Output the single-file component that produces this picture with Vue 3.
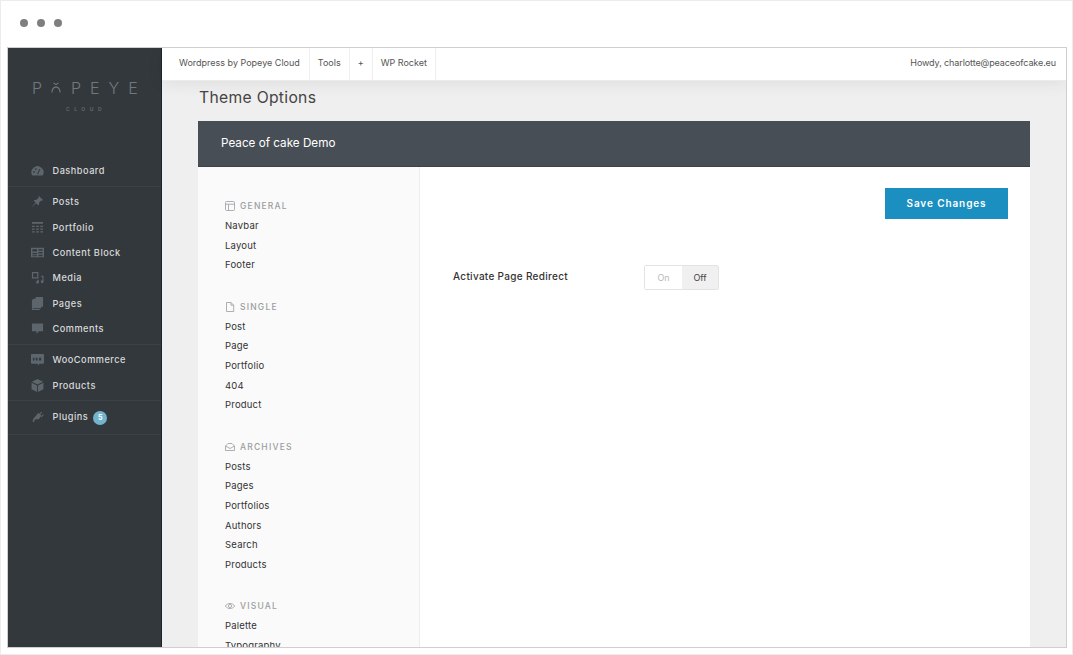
<script setup>
const side = [
  { items: [{ t: 'Dashboard', i: 'dash' }], cls: 'first' },
  { items: [
    { t: 'Posts', i: 'pin' }, { t: 'Portfolio', i: 'port' }, { t: 'Content Block', i: 'block' },
    { t: 'Media', i: 'media' }, { t: 'Pages', i: 'pages' }, { t: 'Comments', i: 'comment' } ] },
  { items: [{ t: 'WooCommerce', i: 'woo' }, { t: 'Products', i: 'box' }] },
  { items: [{ t: 'Plugins', i: 'plug', badge: '5' }], cls: 'last' }
]
const tabs = ['Wordpress by Popeye Cloud', 'Tools', '+', 'WP Rocket']
const sections = [
  { h: 'GENERAL', i: 'layout', items: ['Navbar', 'Layout', 'Footer'] },
  { h: 'SINGLE', i: 'file', items: ['Post', 'Page', 'Portfolio', '404', 'Product'] },
  { h: 'ARCHIVES', i: 'mail', items: ['Posts', 'Pages', 'Portfolios', 'Authors', 'Search', 'Products'] },
  { h: 'VISUAL', i: 'eye', items: ['Palette', 'Typography'] }
]
</script>

<template>
  <div class="page">
    <div class="chrome">
      <i class="dot"></i><i class="dot"></i><i class="dot"></i>
    </div>
    <div class="window">
      <aside class="sidebar">
        <div class="logo">
          <div class="logo-main">
            <span>P</span>
            <svg class="logo-o" viewBox="0 0 12 14" width="10" height="13">
              <path d="M3 1.500 6 3.500 9 1.500" fill="none" stroke="#73787c" stroke-width="1.300" />
              <path d="M1 13C1.500 8.500 3.500 6.500 6 6.500S10.500 8.500 11 13" fill="none" stroke="#73787c" stroke-width="1.300" />
            </svg>
            <span>PEYE</span>
          </div>
          <div class="logo-sub">CLOUD</div>
        </div>
        <nav class="side-nav">
          <div v-for="(g, gi) in side" :key="gi" class="side-group" :class="g.cls">
            <a v-for="it in g.items" :key="it.t" class="side-item">
              <svg class="side-icon" viewBox="0 0 14 14" width="14" height="14" fill="#5c666c">
                <template v-if="it.i === 'dash'">
                  <path d="M1.500 12.500a6.500 6.500 0 1 1 11 0Z" />
                  <path d="M7 11 9.500 5.500" stroke="#33383c" stroke-width="1.100" />
                  <circle cx="3.200" cy="8.500" r=".9" fill="#33383c" /><circle cx="5.200" cy="5.500" r=".9" fill="#33383c" />
                </template>
                <path v-else-if="it.i === 'pin'" d="M8.500 1 13 5.500 12 6.200 11 5.800 8.800 8 8.600 10.500 7.600 11 5.500 8.800 1 13 .8 12.800 5 8.200 3 6.300 3.500 5.400 6 5.200 8.200 3 8 2Z" />
                <path v-else-if="it.i === 'port'" d="M1 1h12v2H1ZM1 5h3v1.500H1ZM5.500 5h3v1.500h-3ZM10 5h3v1.500h-3ZM1 8h3v1.500H1ZM5.500 8h3v1.500h-3ZM10 8h3v1.500h-3ZM1 11h3v1.500H1ZM5.500 11h3v1.500h-3ZM10 11h3v1.500h-3Z" />
                <path v-else-if="it.i === 'block'" d="M0 2h14v10H0Zm1.500 1.500v2.500h5V3.500Zm6.500 0V5h4.500V3.500ZM8 6.500V8h4.500V6.500ZM1.500 7.500V9h5V7.500ZM8 9.500V11h4.500V9.500ZM1.500 10V11h5v-1Z" fill-rule="evenodd" />
                <path v-else-if="it.i === 'media'" d="M1 1h7v7H1Zm1.300 1.300v4.400h4.400V2.300ZM11 5h2.500v6.500a1.500 1.500 0 1 1-1.200-1.400V6.500H11ZM7 9.500h1.500v2.500A1.500 1.500 0 1 1 7 10.600Z" fill-rule="evenodd" />
                <path v-else-if="it.i === 'pages'" d="M5 0h8v10.500h-2V12H2V2h3Z M1 3v11h8.500v-1H2V3Z" />
                <path v-else-if="it.i === 'comment'" d="M1 1.500h12v8.500H8.500L6 13v-3H1Z" />
                <path v-else-if="it.i === 'woo'" d="M1 1h12a1 1 0 0 1 1 1v8.500a1 1 0 0 1-1 1H9L8 13.500 7 11.500H1a1 1 0 0 1-1-1V2a1 1 0 0 1 1-1Zm1 4v3h1.700V5Zm3 0v3h2V5Zm3.500 0v3h2.500V5Z" fill-rule="evenodd" />
                <path v-else-if="it.i === 'box'" d="M7 0 13 3 7 6 1 3ZM.6 4 6.500 7v7L.6 11ZM13.400 4 7.500 7v7l5.900-3Z" />
                <path v-else-if="it.i === 'plug'" d="M8 3 11 6 8.500 10H4.500L3.500 12.500 1.500 13 2.500 9.500ZM8.500 5 11 1.800 12 2.800 9.500 5.500ZM10.500 7 13 4.500 13.800 5.500 11 8Z" />
              </svg>
              <span class="side-label">{{ it.t }}</span>
              <span v-if="it.badge" class="badge">{{ it.badge }}</span>
            </a>
          </div>
        </nav>
      </aside>

      <main class="main">
        <header class="topbar">
          <div class="tabs">
            <span v-for="t in tabs" :key="t" class="tab">{{ t }}</span>
          </div>
          <span class="howdy">Howdy, charlotte@peaceofcake.eu</span>
        </header>
        <div class="content">
          <h1 class="title">Theme Options</h1>
          <section class="card">
            <div class="card-head">Peace of cake Demo</div>
            <div class="card-body">
              <div class="options-nav">
                <div v-for="s in sections" :key="s.h" class="opt-section">
                  <div class="opt-head">
                    <svg viewBox="0 0 10 10" width="10" height="10" fill="none" stroke="#a3a7aa" stroke-width=".9">
                      <template v-if="s.i === 'layout'">
                        <rect x=".5" y=".5" width="9" height="9" rx="1" /><path d="M.5 3.200h9M3.500 3.200v6.300" />
                      </template>
                      <path v-else-if="s.i === 'file'" d="M1.500.5h4.500L8.700 3.200v6.300h-7.200ZM6 .5v2.700h2.700" />
                      <template v-else-if="s.i === 'mail'">
                        <path d="M.5 4 3 1.500h4L9.500 4v4.500h-9Z" /><path d="M.5 4 5 6.500 9.500 4" />
                      </template>
                      <template v-else>
                        <path d="M.3 5C2.800 1.600 7.200 1.600 9.700 5 7.200 8.400 2.800 8.400.3 5Z" /><circle cx="5" cy="5" r="1.600" />
                      </template>
                    </svg>
                    <span>{{ s.h }}</span>
                  </div>
                  <a v-for="it in s.items" :key="it" class="opt-item">{{ it }}</a>
                </div>
              </div>
              <div class="options-panel">
                <div class="actions"><button class="save">Save Changes</button></div>
                <div class="field">
                  <label class="field-label">Activate Page Redirect</label>
                  <div class="toggle">
                    <span class="tg on">On</span>
                    <span class="tg off">Off</span>
                  </div>
                </div>
              </div>
            </div>
          </section>
        </div>
      </main>
    </div>
  </div>
</template>

<style>
html, body { margin: 0; padding: 0; background: #fff; overflow: hidden; }
</style>

<style scoped>
.page {
  width: 1073px;
  height: 655px;
  box-sizing: border-box;
  background: #fff;
  border: 1px solid #ececec;
  overflow: hidden;
  font-family: Inter, "Liberation Sans", sans-serif;
}
.chrome {
  height: 46px;
  box-sizing: border-box;
  padding: 18px 0 0 19px;
  display: flex;
  gap: 9px;
}
.dot { width: 8px; height: 8px; border-radius: 50%; background: #7f7f7f; }
.window {
  margin-left: 6px;
  width: 1060px;
  height: 601px;
  box-sizing: border-box;
  border: 1px solid #cfcfcf;
  display: flex;
  overflow: hidden;
}
.sidebar {
  width: 154px;
  flex: none;
  box-sizing: border-box;
  background: #33383c;
  border-right: 1px solid #1f2327;
}
.logo { height: 107.500px; box-sizing: border-box; padding: 31px 0 0 24px; color: #73787c; }
.logo-main {
  display: flex;
  align-items: center;
  height: 17px;
  font-size: 16px;
  font-weight: 300;
  letter-spacing: 9px;
  white-space: nowrap;
}
.logo-o { margin-right: 10px; }
.logo-sub {
  margin: 10px 0 0 34px;
  font-size: 5px;
  letter-spacing: 4.500px;
  font-weight: 600;
  line-height: 6px;
  color: #666b70;
}
.side-group {
  padding: 2.500px 0;
  border-bottom: 1px solid #3c4145;
}
.side-group.last { padding-bottom: 5.500px; }
.side-item {
  display: flex;
  align-items: center;
  height: 25.300px;
  padding-left: 23px;
}
.side-icon { flex: none; width: 13px; height: 13px; margin-right: 8.500px; }
.side-label {
  font-size: 9.200px;
  font-weight: 500;
  letter-spacing: .5px;
  color: #d8dadb;
  white-space: nowrap;
}
.badge {
  width: 14px;
  height: 14px;
  margin-left: 5px;
  margin-top: 3px;
  border-radius: 50%;
  background: #72b3ce;
  color: #fff;
  font-size: 7px;
  font-weight: 700;
  line-height: 14px;
  text-align: center;
}
.main { flex: 1; min-width: 0; display: flex; flex-direction: column; background: #efefef; }
.topbar {
  height: 33px;
  flex: none;
  box-sizing: border-box;
  background: #fff;
  border-bottom: 1px solid #ececec;
  display: flex;
  justify-content: space-between;
  align-items: stretch;
  padding-right: 10px;
  box-shadow: 0 3px 16px rgba(0,0,0,.07);
  position: relative;
  z-index: 1;
  font-size: 9px;
  color: #555;
}
.tabs { display: flex; }
.tab {
  display: flex;
  align-items: center;
  padding: 0 8px 3px;
  border-right: 1px solid #f0f0f0;
  white-space: nowrap;
}
.tab:first-child { padding: 0 9px 3px 17px; }
.howdy { display: flex; align-items: center; padding-bottom: 3px; letter-spacing: -.1px; }
.content { flex: 1; min-height: 0; padding: 0 36px; overflow: hidden; }
.title {
  margin: 0;
  height: 40px;
  font-size: 15.700px;
  font-weight: 400;
  line-height: 33px;
  color: #444;
  letter-spacing: .3px;
  padding-left: 1px;
  box-sizing: border-box;
}
.card-head {
  height: 46px;
  box-sizing: border-box;
  background: #484e55;
  border-bottom: 1px solid #3d4248;
  color: #fff;
  font-size: 11.700px;
  line-height: 45px;
  padding-left: 23px;
}
.card-body { display: flex; background: #fff; height: 480px; }
.options-nav {
  width: 222px;
  flex: none;
  box-sizing: border-box;
  background: #fafafa;
  border-right: 1px solid #ececec;
  padding: 29.100px 0 0 27px;
}
.opt-section { margin-bottom: 21.500px; }
.opt-head {
  display: flex;
  align-items: center;
  height: 20px;
  font-size: 8.500px;
  font-weight: 500;
  letter-spacing: 1.200px;
  color: #9a9ea1;
}
.opt-head svg { margin-right: 5px; flex: none; }
.opt-item {
  display: block;
  height: 19.700px;
  line-height: 19.700px;
  font-size: 9.500px;
  color: #333;
  letter-spacing: .2px;
}
.options-panel { flex: 1; padding: 21px 22px 0 33px; }
.actions { display: flex; justify-content: flex-end; }
.save {
  width: 123px;
  height: 31px;
  border: 0;
  padding: 0 0 2px;
  background: #1a8fc0;
  color: #fff;
  font: 600 10px Inter, "Liberation Sans", sans-serif;
  letter-spacing: .9px;
}
.field { display: flex; align-items: center; margin-top: 46px; }
.field-label {
  width: 191px;
  font-size: 10px;
  font-weight: 500;
  color: #333;
  letter-spacing: .3px;
  margin-top: -4px;
}
.toggle {
  display: flex;
  width: 75px;
  height: 25px;
  box-sizing: border-box;
  border: 1px solid #e3e3e3;
  border-radius: 2px;
  font-size: 9px;
}
.tg { display: flex; align-items: center; justify-content: center; }
.on { width: 37px; color: #b9b9b9; background: #fff; }
.off { flex: 1; color: #444; background: #f0f0f0; }
</style>
